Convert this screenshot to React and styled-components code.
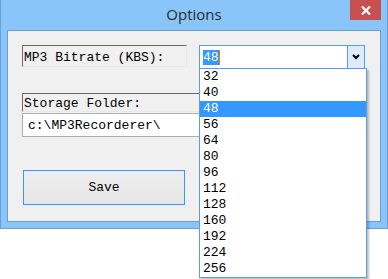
import React from "react";
import styled, { createGlobalStyle } from "styled-components";

const rates = [32, 40, 48, 56, 64, 80, 96, 112, 128, 160, 192, 224, 256];

const GlobalStyle = createGlobalStyle`
  html, body {
    margin: 0;
    padding: 0;
    background: #ffffff;
  }
  body {
    width: 388px;
    height: 279px;
    overflow: hidden;
  }
`;

const Window = styled.div`
  position: relative;
  width: 388px;
  height: 229px;
  box-sizing: border-box;
  background: #89c5f8;
  border: 1px solid #6a9fd5;
  border-top: none;
  display: flex;
  flex-direction: column;
`;

const TitleBar = styled.div`
  height: 30px;
  display: flex;
  align-items: flex-start;
  justify-content: center;
  position: relative;
`;

const Title = styled.div`
  font-family: "Open Sans", "Noto Sans", sans-serif;
  font-size: 15px;
  color: #2a2a2a;
  margin-top: 4px;
`;

const CloseButton = styled.div`
  position: absolute;
  top: 0;
  right: 6px;
  width: 31px;
  height: 20px;
  background: #c75050;
  color: #ffffff;
  display: flex;
  align-items: center;
  justify-content: center;
`;

const Client = styled.div`
  margin: 0 6px;
  height: 192px;
  box-sizing: border-box;
  background: #f0f0f0;
  border: 1px solid #6c9ed6;
  padding: 14px 15px 0 14px;
  font-family: "Liberation Mono", "Courier New", monospace;
  font-size: 13px;
  color: #000000;
`;

const Row = styled.div`
  display: flex;
  gap: 12px;
`;

const Label = styled.div`
  box-sizing: border-box;
  width: ${(p) => p.$width || "auto"};
  flex: ${(p) => (p.$width ? "none" : "1")};
  height: ${(p) => p.$height}px;
  margin-top: ${(p) => p.$top || 0}px;
  border-top: 1px solid #6a6a6a;
  border-left: 1px solid #6a6a6a;
  border-right: 1px solid #e8e8e8;
  border-bottom: 1px solid #e8e8e8;
  padding: ${(p) => p.$pad || "3px 0 0 1px"};
  line-height: 15px;
  white-space: pre;
`;

const Field = styled.div`
  box-sizing: border-box;
  height: 24px;
  margin-top: 1px;
  background: #ffffff;
  border: 1px solid #abadb3;
  padding: 4px 0 0 5px;
  line-height: 15px;
`;

const Combo = styled.div`
  box-sizing: border-box;
  width: 167px;
  height: 24px;
  background: #ffffff;
  border: 1px solid #5b9de1;
  display: flex;
  align-items: stretch;
`;

const ComboText = styled.div`
  flex: 1;
  padding: 4px 0 0 3px;
  line-height: 15px;
`;

const Selected = styled.span`
  background: #3399ff;
  color: #ffffff;
  border-right: 1px solid #e07a00;
`;

const ArrowButton = styled.div`
  width: 16px;
  background: #dcecfc;
  border-left: 1px solid #5b9de1;
  display: flex;
  align-items: center;
  justify-content: center;
`;

const SaveButton = styled.div`
  box-sizing: border-box;
  width: 162px;
  height: 35px;
  margin: 33px 0 0 1px;
  border: 1px solid #3399ff;
  background: linear-gradient(#efefef, #e5e5e5);
  display: flex;
  align-items: center;
  justify-content: center;
`;

const List = styled.div`
  position: absolute;
  left: 198px;
  top: 68px;
  width: 168px;
  box-sizing: border-box;
  background: #ffffff;
  border: 1px solid #5b9de1;
  box-shadow: 2px 2px 2px rgba(0, 0, 0, 0.25);
  font-family: "Liberation Mono", "Courier New", monospace;
  font-size: 13px;
`;

const Item = styled.div`
  height: 16px;
  line-height: 16px;
  padding-left: 3px;
  background: ${(p) => (p.$active ? "#3399ff" : "transparent")};
  color: ${(p) => (p.$active ? "#ffffff" : "#000000")};
`;

export default function App() {
  return (
    <>
      <GlobalStyle />
      <Window>
        <TitleBar>
          <Title>Options</Title>
          <CloseButton>
            <svg width="10" height="9" viewBox="0 0 10 9">
              <path d="M1 0.5 L9 8.5 M9 0.5 L1 8.5" stroke="#fff" strokeWidth="2.2" />
            </svg>
          </CloseButton>
        </TitleBar>
        <Client>
          <Row>
            <Label $width="165px" $height={22} $pad="4px 0 0 1px">MP3 Bitrate (KBS):</Label>
            <Combo>
              <ComboText>
                <Selected>48</Selected>
              </ComboText>
              <ArrowButton>
                <svg width="8" height="6" viewBox="0 0 8 6">
                  <path d="M1 1 L4 4 L7 1" stroke="#000" strokeWidth="2" fill="none" />
                </svg>
              </ArrowButton>
            </Combo>
          </Row>
          <Label $height={19} $top={24} $pad="2px 0 0 1px">Storage Folder:</Label>
          <Field>c:\MP3Recorderer\</Field>
          <SaveButton>Save</SaveButton>
        </Client>
        <List>
          {rates.map((r) => (
            <Item key={r} $active={r === 48}>
              {r}
            </Item>
          ))}
        </List>
      </Window>
    </>
  );
}
